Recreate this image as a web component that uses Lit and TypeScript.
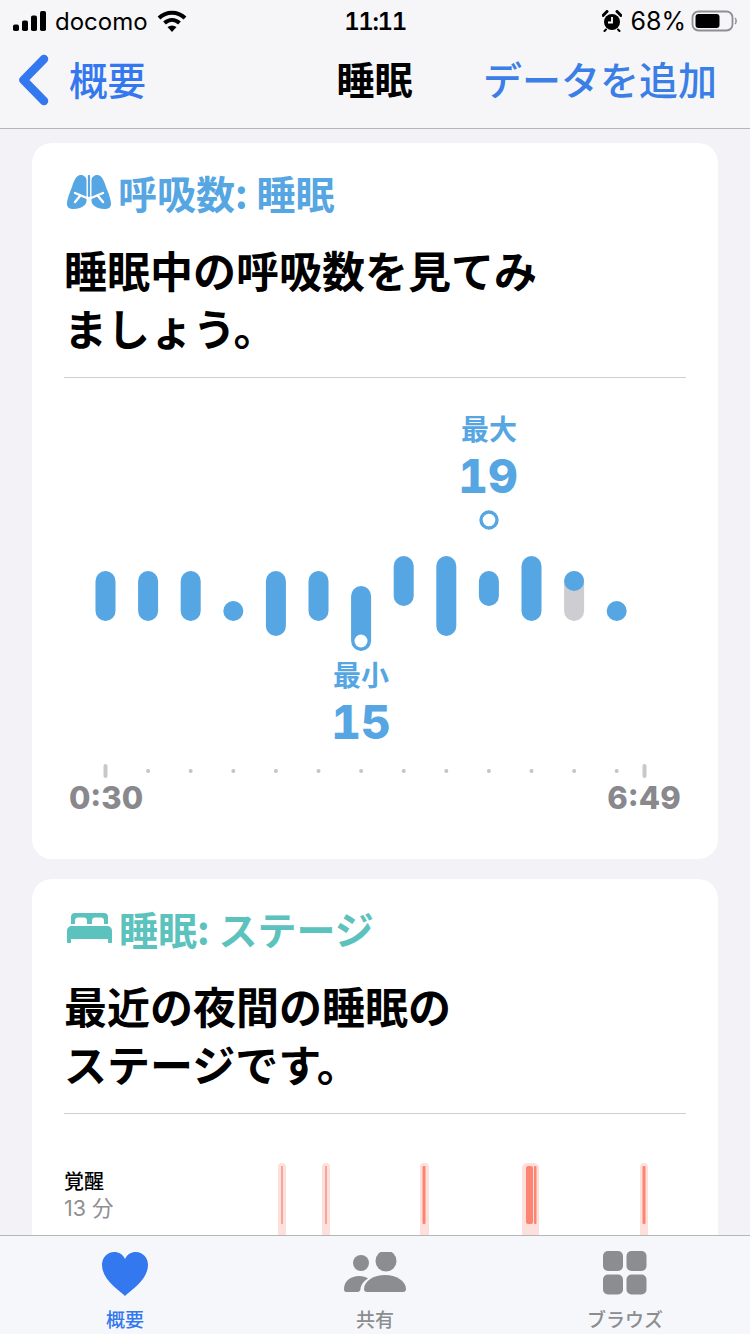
import { LitElement, html, css, svg } from "lit";
import { customElement } from "lit/decorators.js";

const BLUE = "#55a6e2";
const bars: [number, number][] = [
  [571, 621], [571, 621], [571, 621], [601, 621], [571, 636], [571, 621],
  [586, 651], [556, 606], [556, 636], [571, 606], [556, 621], [571, 621], [601, 621],
];

@customElement("app-root")
export class AppRoot extends LitElement {
  static styles = css`
    :host {
      display: block;
      width: 750px;
      height: 1334px;
      background: #f2f2f7;
      overflow: hidden;
      position: relative;
      font-family: "Noto Sans CJK JP", "Inter", sans-serif;
      color: #000;
    }
    .top {
      height: 128px;
      background: #f6f6f8;
      border-bottom: 1px solid #b5b5ba;
    }
    .status {
      height: 42px;
      display: grid;
      grid-template-columns: 1fr auto 1fr;
      align-items: center;
    }
    .s-left { display: flex; align-items: center; font: 400 24px "Inter", sans-serif; padding-left: 13px; }
    .s-left .carrier { margin-left: 9px; }
    .s-left .wifi { margin-left: 9px; }
    .s-time { font: 600 24px "Inter", sans-serif; font-variant-numeric: tabular-nums; letter-spacing: -1.4px; }
    .s-right { display: flex; align-items: center; justify-content: flex-end; padding-right: 13px; font: 400 25px "Inter", sans-serif; }
    .s-right .pct { margin: 0 5px 0 8px; }
    .nav {
      height: 86px;
      display: grid;
      grid-template-columns: 1fr auto 1fr;
      align-items: center;
      padding: 0 33px 14px 18px;
      box-sizing: border-box;
    }
    .back { display: flex; align-items: center; gap: 19px; color: #3478f0; font-weight: 500; font-size: 38.500px; line-height: 1; }
    .back svg { margin-top: 4px; }
    .title { font-weight: 700; font-size: 38px; line-height: 1; transform: translateX(7px); }
    .add { text-align: right; color: #3a7ee6; font-weight: 500; font-size: 39px; line-height: 1; white-space: nowrap; }
    .cards {
      display: flex;
      flex-direction: column;
      gap: 20px;
      padding: 14px 32px 0;
    }
    .card {
      background: #fff;
      border-radius: 20px;
      padding: 26px 32px 0;
    }
    .c1 { height: 690px; }
    .c2 { height: 500px; }
    .head {
      display: flex;
      align-items: center;
      gap: 7px;
      height: 46px;
      font-weight: 700;
      font-size: 39px;
      line-height: 1;
      margin-left: 3px;
    }
    .head.b { color: #55a6e2; }
    .head.g { color: #5bc2bd; }
    h2 {
      margin: 25px 0 0;
      font-size: 43px;
      font-weight: 700;
      line-height: 58px;
    }
    hr {
      border: 0;
      height: 1px;
      background: #cfcfd3;
      margin: 21px 0 0;
    }
    .chart { position: relative; height: 480px; margin: 0 -32px; }
    .chart svg { position: absolute; left: 0; top: 0; }
    .lab {
      position: absolute;
      width: 80px;
      text-align: center;
      color: #55a6e2;
      font-weight: 700;
      font-size: 28px;
      line-height: 30px;
    }
    .lab.max { left: 417px; top: 35px; }
    .lab.min { left: 289px; top: 281px; }
    .num {
      position: absolute;
      width: 90px;
      text-align: center;
      color: #55a6e2;
      font: 800 46px/50px "Inter", sans-serif;
      font-variant-numeric: tabular-nums;
    }
    .num.max { left: 411px; top: 73px; }
    .num.min { left: 284px; top: 319px; }
    .axis {
      position: absolute;
      font: 800 31px/34px "Inter", sans-serif;
      color: #88888d;
      width: 100px;
      text-align: center;
      top: 403px;
    }
    .axis.a { left: 24px; }
    .axis.b { left: 562px; }
    .stage { display: flex; padding-top: 54px; position: relative; }
    .st-l { font-weight: 500; font-size: 20px; line-height: 26px; }
    .st-v { font: 400 21.500px/28px "Inter", "Noto Sans CJK JP", sans-serif; color: #8e8e93; }
    .stage svg { position: absolute; left: 0; top: 49px; }
    .tab {
      position: absolute;
      left: 0; right: 0; bottom: 0;
      height: 98px;
      background: #f6f7fa;
      border-top: 1px solid #b5b5ba;
      display: grid;
      grid-template-columns: repeat(3, 1fr);
    }
    .t { display: flex; flex-direction: column; align-items: center; padding-top: 16px; color: #8b8d90; }
    .t.on { color: #3478f0; }
    .t svg { display: block; height: 48px; }
    .t svg.grid { height: 44px; margin: -1px 0 5px; }
    .t span { font-size: 19px; font-weight: 500; line-height: 24px; margin-top: 7px; }
  `;

  private chart() {
    const dots: number[] = [];
    for (let i = 1; i < 13; i++) dots.push(105.5 + i * 42.6);
    return html`
      <svg width="686" height="480" viewBox="32 378 686 480">
        ${bars.map(([a, b], i) => {
          const x = 105.5 + i * 42.6;
          if (i === 11) {
            return svg`<rect x=${x - 10} y="571" width="20" height="50" rx="10" fill="#cdcdd2"/>
              <circle cx=${x} cy="581" r="10" fill=${BLUE}/>`;
          }
          return svg`<rect x=${x - 10} y=${a} width="20" height=${b - a} rx="10" fill=${BLUE}/>`;
        })}
        <circle cx="361" cy="641" r="6.5" fill="#fff"/>
        <circle cx="489" cy="520" r="8" fill="#fff" stroke=${BLUE} stroke-width="3.4"/>
        <rect x="103.500" y="764" width="4" height="14" rx="2" fill="#c8c8cc"/>
        <rect x="642.500" y="764" width="4" height="14" rx="2" fill="#c8c8cc"/>
        ${dots.map((x) => svg`<circle cx=${x} cy="771" r="2" fill="#c4c4c8"/>`)}
      </svg>
      <div class="lab max">最大</div>
      <div class="num max">19</div>
      <div class="lab min">最小</div>
      <div class="num min">15</div>
      <div class="axis a">0:30</div>
      <div class="axis b">6:49</div>
    `;
  }

  render() {
    return html`
      <div class="top">
        <div class="status">
          <div class="s-left">
            <svg width="33" height="20" viewBox="0 0 33 20">
              <rect x="0" y="13.500" width="6" height="6.500" rx="1.800" fill="#000"/>
              <rect x="9" y="9.500" width="6" height="10.500" rx="1.800" fill="#000"/>
              <rect x="18" y="4.500" width="6" height="15.500" rx="1.800" fill="#000"/>
              <rect x="27" y="0" width="6" height="20" rx="1.800" fill="#000"/>
            </svg>
            <span class="carrier">docomo</span>
            <svg class="wifi" width="30" height="22" viewBox="0 0 30 22">
              <path d="M2 8 C9.500 1 20.500 1 28 8" fill="none" stroke="#000" stroke-width="4"/>
              <path d="M7.500 13 C12 9 18 9 22.500 13" fill="none" stroke="#000" stroke-width="4"/>
              <path d="M10.500 17 C13.500 15 16.500 15 19.500 17 L15 22 Z" fill="#000"/>
            </svg>
          </div>
          <div class="s-time">11:11</div>
          <div class="s-right">
            <svg width="20" height="22" viewBox="0 0 20 22">
              <circle cx="10" cy="12" r="8" fill="#000"/>
              <path d="M10 7v5.500H6" stroke="#fff" stroke-width="1.800" fill="none"/>
              <path d="M1 5.500 L5 1.500 M19 5.500 L15 1.500" stroke="#000" stroke-width="3" stroke-linecap="round"/>
              <path d="M4 19.500 L2.500 21 M16 19.500 L17.500 21" stroke="#000" stroke-width="2" stroke-linecap="round"/>
            </svg>
            <span class="pct">68%</span>
            <svg width="46" height="24" viewBox="0 0 46 24">
              <rect x="1.500" y="2.500" width="40" height="19" rx="6" fill="none" stroke="#8e8e93" stroke-width="1.800"/>
              <rect x="4.500" y="5" width="24" height="14" rx="3" fill="#000"/>
              <path d="M44 9 C45.500 10 45.500 14 44 15" stroke="#8e8e93" stroke-width="1.500" fill="none"/>
            </svg>
          </div>
        </div>
        <div class="nav">
          <div class="back">
            <svg width="32" height="52" viewBox="0 0 32 52">
              <path d="M26 5 L5.500 26 L26 47" fill="none" stroke="#3478f0" stroke-width="8.500" stroke-linecap="round" stroke-linejoin="round"/>
            </svg>
            <span>概要</span>
          </div>
          <div class="title">睡眠</div>
          <div class="add">データを追加</div>
        </div>
      </div>
      <div class="cards">
        <div class="card c1">
          <div class="head b">
            <svg width="44" height="34" viewBox="0 0 44 34">
              <path fill=${BLUE} d="M13.500 0c3 0 6 2 6 5v21c0 4-5.500 8-12.500 8-5 0-7-2-7-5 0-5 3-12 5-17C7 5 9.500 0 13.500 0z"/>
              <path fill=${BLUE} d="M30.500 0c-3 0-6 2-6 5v21c0 4 5.500 8 12.500 8 5 0 7-2 7-5 0-5-3-12-5-17C37 5 34.500 0 30.500 0z"/>
              <g fill="none" stroke="#fff" stroke-width="2.400" stroke-linecap="round">
                <path d="M20 23 L8 18 M13 21 L8 27"/>
                <path d="M24 23 L36 18 M31 21 L36 27"/>
              </g>
              <path d="M22 1 V21" fill="none" stroke=${BLUE} stroke-width="2.200" stroke-linecap="round"/>
            </svg>
            <span>呼吸数: 睡眠</span>
          </div>
          <h2>睡眠中の呼吸数を見てみ<br />ましょう。</h2>
          <hr />
          <div class="chart">${this.chart()}</div>
        </div>
        <div class="card c2">
          <div class="head g">
            <svg width="45" height="30" viewBox="0 0 45 30">
              <path fill="#5bc2bd" d="M8 0h29c2.500 0 4 1.500 4 4v7h-4V8c0-2-1-3.500-3-3.500h-6c-2 0-3 1.500-3 3.500v3h-5V8c0-2-1-3.500-3-3.500h-6C9 4.500 8 6 8 8v3H4V4c0-2.500 1.500-4 4-4z"/>
              <path fill="#5bc2bd" d="M5 13h35c3 0 5 2 5 5v11c0 .6-.4 1-1 1h-2c-.6 0-1-.4-1-1v-3H4v3c0 .6-.4 1-1 1H1c-.6 0-1-.4-1-1V18c0-3 2-5 5-5z"/>
            </svg>
            <span>睡眠: ステージ</span>
          </div>
          <h2>最近の夜間の睡眠の<br />ステージです。</h2>
          <hr />
          <div class="stage">
            <div>
              <div class="st-l">覚醒</div>
              <div class="st-v">13 分</div>
            </div>
            <svg width="622" height="80" viewBox="64 1163 622 80">
              <rect x="278" y="1163" width="8" height="80" rx="4" fill="#fde0dc"/>
              <rect x="281.300" y="1166" width="1.400" height="58" fill="#f0907e"/>
              <rect x="322" y="1163" width="8" height="80" rx="4" fill="#fde0dc"/>
              <rect x="325.300" y="1166" width="1.400" height="58" fill="#f0907e"/>
              <rect x="420" y="1163" width="9" height="80" rx="4" fill="#fde0dc"/>
              <rect x="422.500" y="1166" width="3" height="58" rx="1" fill="#fb8570"/>
              <rect x="522" y="1163" width="17" height="80" rx="5" fill="#fde0dc"/>
              <rect x="526" y="1166" width="7" height="58" rx="2" fill="#fb8570"/>
              <rect x="534" y="1166" width="2.500" height="58" rx="1" fill="#fb8570"/>
              <rect x="640" y="1163" width="8" height="80" rx="4" fill="#fde0dc"/>
              <rect x="642.500" y="1166" width="3" height="58" rx="1" fill="#fb8570"/>
            </svg>
          </div>
        </div>
      </div>
      <div class="tab">
        <div class="t on">
          <svg width="48" height="48" viewBox="0 0 48 48">
            <path fill="#3478f0" d="M24 44C19 39 1 28 1 13 1 5.500 6.500 0 13 0c5 0 9 2.500 11 7 2-4.500 6-7 11-7 6.500 0 12 5.500 12 13 0 15-18 26-23 31z"/>
          </svg>
          <span>概要</span>
        </div>
        <div class="t">
          <svg width="62" height="48" viewBox="0 0 62 48">
            <circle cx="17" cy="11" r="8" fill="#8b8d90"/>
            <circle cx="42" cy="9" r="10.500" fill="#8b8d90"/>
            <path fill="#8b8d90" d="M0 37c0-8 7-13 15-13 4 0 7 1 9 2.500-4 2.500-7 6-7.500 10.500-.1 1.500-1 3-3 3H2c-1.500 0-2-1.500-2-3z"/>
            <path fill="#8b8d90" d="M20 37c0-8 10-14 21-14s21 6 21 14c0 2-1 3-3 3H23c-2 0-3-1-3-3z"/>
          </svg>
          <span>共有</span>
        </div>
        <div class="t">
          <svg class="grid" width="44" height="44" viewBox="0 0 44 44">
            <rect x="0" y="0" width="20" height="20" rx="5" fill="#8b8d90"/>
            <rect x="23.500" y="0" width="20" height="20" rx="5" fill="#8b8d90"/>
            <rect x="0" y="23.500" width="20" height="20" rx="5" fill="#8b8d90"/>
            <rect x="23.500" y="23.500" width="20" height="20" rx="5" fill="#8b8d90"/>
          </svg>
          <span>ブラウズ</span>
        </div>
      </div>
    `;
  }
}
